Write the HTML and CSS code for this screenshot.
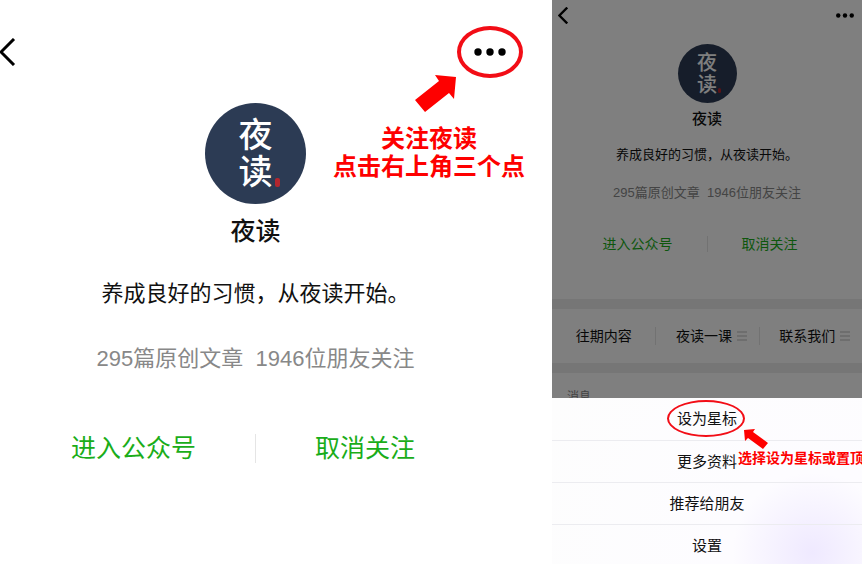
FILE: index.html
```
<!DOCTYPE html>
<html lang="zh-CN">
<head>
  <meta charset="utf-8">
  <meta name="viewport" content="width=device-width, initial-scale=1">
  <title>夜读</title>
  <link rel="stylesheet" href="styles.css">
</head>
<body>
<div class="steps">
  <section class="phone large">
    <header class="topbar">
      <button class="icon-button" aria-label="返回">
        <svg class="back" viewBox="0 0 16 28"><path d="M14 1L1 14l13 13"/></svg>
      </button>
      <button class="icon-button more" aria-label="更多">
        <svg class="dots" viewBox="0 0 32 8"><circle cx="4" cy="4" r="3.7"/><circle cx="16" cy="4" r="3.7"/><circle cx="28" cy="4" r="3.7"/></svg>
        <span class="ring"></span>
      </button>
    </header>
    <div class="profile">
      <div class="avatar"><span>夜</span><span>读</span><i class="seal"></i></div>
      <h1 class="name">夜读</h1>
      <p class="intro">养成良好的习惯，从夜读开始。</p>
      <p class="stats">295篇原创文章&nbsp; 1946位朋友关注</p>
      <div class="actions">
        <a href="#enter">进入公众号</a>
        <span class="line"></span>
        <a href="#unfollow">取消关注</a>
      </div>
    </div>
    <div class="note">
      <svg class="arrow" viewBox="0 0 42 42"><path d="M41 4L20 2l4 6L0 27l10 12 24-19 5 6z"/></svg>
      <p>关注夜读<br>点击右上角三个点</p>
    </div>
  </section>

  <section class="phone small">
    <header class="topbar">
      <button class="icon-button" aria-label="返回">
        <svg class="back" viewBox="0 0 16 28"><path d="M15 1L2 14l13 13"/></svg>
      </button>
      <button class="icon-button more" aria-label="更多">
        <svg class="dots" viewBox="0 0 32 8"><circle cx="4" cy="4" r="3.9"/><circle cx="16" cy="4" r="3.9"/><circle cx="28" cy="4" r="3.9"/></svg>
      </button>
    </header>
    <div class="profile">
      <div class="avatar"><span>夜</span><span>读</span><i class="seal"></i></div>
      <h2 class="name">夜读</h2>
      <p class="intro">养成良好的习惯，从夜读开始。</p>
      <p class="stats">295篇原创文章&nbsp; 1946位朋友关注</p>
      <div class="actions">
        <a href="#enter">进入公众号</a>
        <span class="line"></span>
        <a href="#unfollow">取消关注</a>
      </div>
    </div>
    <nav class="tabs">
      <a href="#past">往期内容</a>
      <a href="#lesson" class="has-menu">夜读一课<svg class="menu" viewBox="0 0 10 10"><path d="M0 1h10M0 5h10M0 9h10"/></svg></a>
      <a href="#contact" class="has-menu">联系我们<svg class="menu" viewBox="0 0 10 10"><path d="M0 1h10M0 5h10M0 9h10"/></svg></a>
    </nav>
    <p class="messages">消息</p>
    <div class="mask"></div>
    <div class="sheet">
      <button>设为星标<span class="ring"></span></button>
      <button>更多资料</button>
      <button>推荐给朋友</button>
      <button>设置</button>
      <div class="note">
        <svg class="arrow" viewBox="0 0 24 20"><path d="M0 1L11 0 9 3l15 11-5 6L4 9l-3 3z"/></svg>
        <p>选择设为星标或置顶</p>
      </div>
    </div>
  </section>
</div>
</body>
</html>
```

FILE: styles.css
```
* {
  box-sizing: border-box;
}

body {
  margin: 0;
  background: #fff;
  font-family: "Liberation Sans", "Noto Sans CJK SC", sans-serif;
  color: #111;
}

h1, h2, p {
  margin: 0;
}

a {
  color: inherit;
  text-decoration: none;
}

button {
  border: 0;
  padding: 0;
  background: none;
  color: inherit;
  font-family: inherit;
  cursor: pointer;
}

svg {
  display: block;
}

.steps {
  display: grid;
  grid-template-columns: 552fr 310fr;
  min-height: 100vh;
}

.phone {
  position: relative;
  overflow: hidden;
  background: #fff;
}

.topbar {
  display: flex;
  align-items: center;
  justify-content: space-between;
}

.icon-button {
  position: relative;
}

.back {
  fill: none;
  stroke: #000;
  stroke-width: 3;
}

.profile {
  display: flex;
  flex-direction: column;
  align-items: center;
}

.avatar {
  position: relative;
  display: flex;
  flex-direction: column;
  align-items: center;
  justify-content: center;
  border-radius: 50%;
  background: #2c3b54;
  color: #fff;
  font-weight: 500;
}

.seal {
  position: absolute;
  left: 69%;
  top: 74%;
  width: 5%;
  height: 9%;
  border-radius: 2px;
  background: #b3262e;
}

.name {
  font-weight: 500;
}

.stats {
  color: #888;
}

.actions {
  display: grid;
  grid-template-columns: 1fr 1px 1fr;
  align-items: center;
  width: 100%;
  color: #1aad19;
}

.actions a:first-child {
  text-align: right;
}

.line {
  background: #e5e5e5;
}

/* red marks drawn over the screens */
.ring {
  position: absolute;
  border: 4px solid #f20d16;
  border-radius: 50%;
}

.note {
  position: absolute;
  color: #fe0000;
  font-weight: 700;
  text-align: center;
  white-space: nowrap;
}

.arrow {
  fill: #fe0000;
}

/* first screen */
.large .topbar {
  height: 103px;
  padding-right: 46px;
}

.large .back {
  width: 16px;
  height: 28px;
}

.large .dots {
  width: 32px;
  height: 8px;
}

.large .ring {
  inset: -22px -17px;
}

.large .profile {
  padding-right: 41px;
}

.large .avatar {
  width: 101px;
  height: 101px;
  font-size: 34px;
  line-height: 37px;
}

.large .name {
  margin-top: 9px;
  font-size: 25px;
  line-height: 36px;
}

.large .intro {
  margin-top: 29px;
  font-size: 22px;
  line-height: 32px;
}

.large .stats {
  margin-top: 33px;
  font-size: 22px;
  line-height: 32px;
}

.large .actions {
  gap: 59px;
  margin-top: 55px;
  font-size: 25px;
  line-height: 36px;
}

.large .line {
  height: 29px;
}

.large .note {
  top: 73px;
  right: 27px;
  font-size: 24px;
  line-height: 28px;
}

.large .arrow {
  width: 42px;
  height: 42px;
  margin: 0 0 10px 82px;
}

/* second screen */
.small .topbar {
  height: 30px;
  margin-bottom: 14px;
  padding: 0 8px 0 6px;
}

.small .back {
  width: 10px;
  height: 17px;
  stroke-width: 4;
}

.small .dots {
  width: 18px;
  height: 5px;
}

.small .avatar {
  width: 59px;
  height: 59px;
  font-size: 20px;
  line-height: 22px;
}

.small .name {
  margin-top: 6px;
  font-size: 15px;
  line-height: 20px;
}

.small .intro {
  margin-top: 16px;
  font-size: 13px;
  line-height: 20px;
}

.small .stats {
  margin-top: 18px;
  font-size: 13px;
  line-height: 20px;
}

.small .actions {
  gap: 34px;
  margin-top: 31px;
  margin-bottom: 45px;
  font-size: 14px;
  line-height: 20px;
}

.small .line {
  height: 16px;
}

.tabs {
  display: grid;
  grid-template-columns: repeat(3, 1fr);
  border: solid #ececec;
  border-width: 10px 0;
  padding: 18px 0;
  font-size: 14px;
  line-height: 18px;
}

.tabs a {
  display: flex;
  align-items: center;
  justify-content: center;
  gap: 5px;
}

.tabs a + a {
  border-left: 1px solid #e5e5e5;
}

.tabs .has-menu {
  padding-left: 8px;
}

.menu {
  width: 10px;
  height: 10px;
  stroke: #bbb;
}

.messages {
  padding: 16px 15px;
  color: #888;
  font-size: 12px;
  line-height: 16px;
}

.mask {
  position: absolute;
  inset: 0;
  background: rgba(0, 0, 0, 0.5);
}

.sheet {
  position: absolute;
  right: 0;
  bottom: -2px;
  left: 0;
  background: radial-gradient(circle at 84% 92%, #efe9ff 0, #fdfcff 80px, #fdfdfd 100%);
}

.sheet button {
  position: relative;
  display: block;
  width: 100%;
  height: 42px;
  font-size: 15px;
  line-height: 20px;
}

.sheet button + button {
  border-top: 1px solid #ececf0;
}

.sheet .ring {
  top: 2px;
  left: calc(50% - 40px);
  width: 78px;
  height: 37px;
  border-width: 2px;
}

.sheet .note {
  top: 31px;
  left: calc(50% + 31px);
  font-size: 14px;
  line-height: 18px;
}

.sheet .arrow {
  width: 24px;
  height: 20px;
  margin-left: 6px;
}
```
